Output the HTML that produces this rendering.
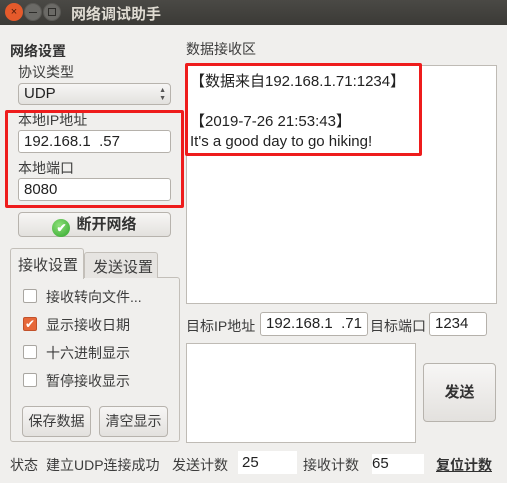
<!DOCTYPE html>
<html><head><meta charset="utf-8"><style>
*{box-sizing:border-box;margin:0;padding:0}
body{width:507px;height:483px;background:#f0efed;position:relative;overflow:hidden;font-family:"Liberation Sans","Noto Sans CJK SC",sans-serif;font-size:14px;color:#3c3c3c}
.a{position:absolute;white-space:nowrap}
.inp{position:absolute;background:#fff;border:1px solid #b5b1ab;border-radius:3px;padding-left:5px;font-size:15px;color:#222}
.btn{position:absolute;border:1px solid #b7b3ad;border-radius:4px;background:linear-gradient(#f7f6f5,#e3e1de);text-align:center}
.cb{position:absolute;left:23px;width:14px;height:14px;border:1px solid #a9a6a1;border-radius:2px;background:#fff}
</style></head><body>
<div class="a" style="left:0;top:0;width:507px;height:25px;background:linear-gradient(#4a4945,#3b3a36)"></div>
<div class="a" style="left:5px;top:3px;width:18px;height:18px;border-radius:50%;background:#e55a2b;color:#4a1a0a;font-size:11px;line-height:18px;text-align:center">×</div>
<div class="a" style="left:24px;top:3px;width:18px;height:18px;border-radius:50%;background:#6b6a66;border:1px solid #5a5955"><div style="position:absolute;left:4px;top:8px;width:8px;height:1px;background:#2e2d2a"></div></div>
<div class="a" style="left:43px;top:3px;width:18px;height:18px;border-radius:50%;background:#6b6a66;border:1px solid #5a5955"><div style="position:absolute;left:4px;top:4px;width:8px;height:8px;border:1px solid #2e2d2a"></div></div>
<div class="a" style="left:71px;top:3px;color:#dfdbd2;font-size:15px;font-weight:bold">网络调试助手</div>

<div class="a" style="left:10px;top:41px;font-weight:bold;color:#333">网络设置</div>
<div class="a" style="left:18px;top:62px">协议类型</div>
<div class="btn" style="left:18px;top:83px;width:153px;height:22px;text-align:left;padding-left:5px;font-size:15px;line-height:20px;color:#222">UDP<span style="position:absolute;right:4px;top:0;font-size:7px;line-height:8px;color:#555;padding-top:3px">▲<br>▼</span></div>
<div class="a" style="left:5px;top:110px;width:179px;height:98px;border:3px solid #ee1c1c;border-radius:2px"></div>
<div class="a" style="left:18px;top:110px">本地IP地址</div>
<div class="inp" style="left:18px;top:130px;width:153px;height:23px;line-height:21px">192.168.1&nbsp;&nbsp;.57</div>
<div class="a" style="left:18px;top:158px">本地端口</div>
<div class="inp" style="left:18px;top:178px;width:153px;height:23px;line-height:21px">8080</div>
<div class="btn" style="left:18px;top:212px;width:153px;height:25px;line-height:23px;font-weight:bold;font-size:15px;color:#333"><span style="display:inline-block;width:18px;height:18px;border-radius:50%;background:radial-gradient(circle at 40% 35%,#8ee07a,#2fa52a);color:#fff;font-size:12px;line-height:18px;vertical-align:-3px;margin-right:6px">✔</span>断开网络</div>

<div class="a" style="left:10px;top:277px;width:170px;height:165px;border:1px solid #c3bfb9;border-radius:3px;background:#f0efed"></div>
<div class="a" style="left:84px;top:252px;width:74px;height:26px;border:1px solid #c3bfb9;border-bottom:none;border-radius:3px 3px 0 0;background:#e6e4e1;padding:3px 0 0 8px;font-size:15px">发送设置</div>
<div class="a" style="left:10px;top:248px;width:74px;height:31px;border:1px solid #c3bfb9;border-bottom:none;border-radius:3px 3px 0 0;background:#f0efed;padding:5px 0 0 7px;font-size:15px">接收设置</div>
<div class="cb" style="top:289px"></div><div class="a" style="left:46px;top:287px">接收转向文件...</div>
<div class="cb" style="top:317px;background:#e6683a;border-color:#c2512a;color:#fff;font-size:12px;line-height:12px;text-align:center">✔</div><div class="a" style="left:46px;top:315px">显示接收日期</div>
<div class="cb" style="top:345px"></div><div class="a" style="left:46px;top:343px">十六进制显示</div>
<div class="cb" style="top:373px"></div><div class="a" style="left:46px;top:371px">暂停接收显示</div>
<div class="btn" style="left:22px;top:406px;width:69px;height:31px;line-height:29px">保存数据</div>
<div class="btn" style="left:99px;top:406px;width:69px;height:31px;line-height:29px">清空显示</div>

<div class="a" style="left:186px;top:39px">数据接收区</div>
<div class="a" style="left:186px;top:65px;width:311px;height:239px;background:#fff;border:1px solid #bfbbb5"></div>
<div class="a" style="left:185px;top:63px;width:237px;height:93px;border:3px solid #ee1c1c;border-radius:2px"></div>
<div class="a" style="left:190px;top:72px;font-size:15px;line-height:20px;color:#222">【数据来自192.168.1.71:1234】<br><br>【2019-7-26 21:53:43】<br>It's a good day to go hiking!</div>

<div class="a" style="left:186px;top:316px">目标IP地址</div>
<div class="inp" style="left:260px;top:312px;width:108px;height:24px;line-height:22px">192.168.1&nbsp;&nbsp;.71</div>
<div class="a" style="left:370px;top:316px">目标端口</div>
<div class="inp" style="left:429px;top:312px;width:58px;height:24px;line-height:22px">1234</div>
<div class="a" style="left:186px;top:343px;width:230px;height:100px;background:#fff;border:1px solid #bfbbb5"></div>
<div class="btn" style="left:423px;top:363px;width:73px;height:59px;line-height:57px;font-weight:bold;font-size:15px;color:#333">发送</div>

<div class="a" style="left:10px;top:455px">状态</div>
<div class="a" style="left:46px;top:455px">建立UDP连接成功</div>
<div class="a" style="left:172px;top:455px">发送计数</div>
<div class="a" style="left:238px;top:451px;width:59px;height:23px;background:#fff;padding:3px 0 0 4px;font-size:15px;color:#222">25</div>
<div class="a" style="left:303px;top:455px">接收计数</div>
<div class="a" style="left:372px;top:454px;width:52px;height:20px;background:#fff;padding:1px 0 0 0;font-size:15px;color:#222">65</div>
<div class="a" style="left:436px;top:455px;font-weight:bold;text-decoration:underline;color:#333">复位计数</div>
</body></html>
